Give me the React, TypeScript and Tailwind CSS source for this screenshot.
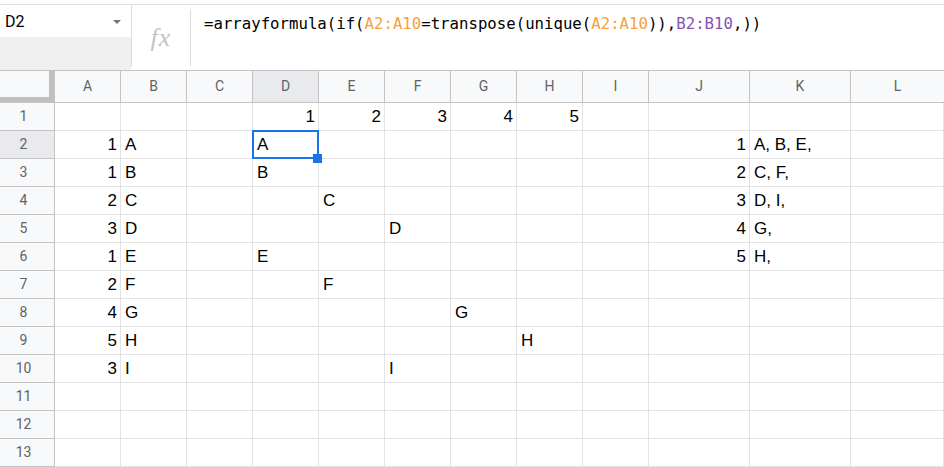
import React from "react";

type Col = { l: string; w: string };
const COLS: Col[] = [
  { l: "A", w: "w-[66px]" },
  { l: "B", w: "w-[66px]" },
  { l: "C", w: "w-[66px]" },
  { l: "D", w: "w-[66px]" },
  { l: "E", w: "w-[66px]" },
  { l: "F", w: "w-[66px]" },
  { l: "G", w: "w-[66px]" },
  { l: "H", w: "w-[66px]" },
  { l: "I", w: "w-[66px]" },
  { l: "J", w: "w-[101px]" },
  { l: "K", w: "w-[101px]" },
  { l: "L", w: "flex-1" },
];

const DATA: Record<string, string> = {
  D1: "1", E1: "2", F1: "3", G1: "4", H1: "5",
  A2: "1", B2: "A", D2: "A", J2: "1", K2: "A, B, E,",
  A3: "1", B3: "B", D3: "B", J3: "2", K3: "C, F,",
  A4: "2", B4: "C", E4: "C", J4: "3", K4: "D, I,",
  A5: "3", B5: "D", F5: "D", J5: "4", K5: "G,",
  A6: "1", B6: "E", D6: "E", J6: "5", K6: "H,",
  A7: "2", B7: "F", E7: "F",
  A8: "4", B8: "G", G8: "G",
  A9: "5", B9: "H", H9: "H",
  A10: "3", B10: "I", F10: "I",
};

const ROWS = Array.from({ length: 13 }, (_, i) => i + 1);

const cellFont = { fontFamily: '"Liberation Sans", Arial, sans-serif' };
const uiFont = { fontFamily: 'Roboto, "Noto Sans", sans-serif' };
const monoFont = { fontFamily: '"DejaVu Sans Mono", "Liberation Mono", monospace' };

function Formula() {
  return (
    <span className="text-[15.7px] leading-[20px] text-black whitespace-nowrap" style={monoFont}>
      =arrayformula(if(
      <span className="text-[#f7a03b]">A2:A10</span>
      =transpose(unique(
      <span className="text-[#f7a03b]">A2:A10</span>
      )),
      <span className="text-[#8553b5]">B2:B10</span>
      ,))
    </span>
  );
}

export default function App() {
  return (
    <div className="w-full h-[467px] overflow-hidden bg-white select-none">
      {/* Formula bar */}
      <div className="h-[5px] border-b border-[#e0e0e0]" />
      <div className="flex h-[65px]">
        <div className="w-[131px] flex flex-col">
          <div className="h-[32px] flex items-start pt-[7px] pl-[5px] pr-[10px] justify-between">
            <span className="text-[16px] leading-[20px] text-black" style={uiFont}>D2</span>
            <svg width="8" height="5" viewBox="0 0 8 5" className="mt-[8px]">
              <path d="M0 0 L8 0 L4 4 Z" fill="#757575" />
            </svg>
          </div>
          <div className="flex-1 bg-[#efefef]" />
        </div>
        <div className="w-px bg-[#dadce0] mb-[3px]" />
        <div className="w-[58px] flex items-center justify-center">
          <span
            className="text-[26px] italic text-[#c4c4c4] leading-none tracking-[1px]"
            style={{ fontFamily: '"Liberation Serif", "Times New Roman", serif' }}
          >
            fx
          </span>
        </div>
        <div className="w-px bg-[#dadce0] mt-[4px] mb-[4px]" />
        <div className="flex-1 pl-[13px] pt-[6px]">
          <Formula />
        </div>
      </div>

      {/* Column header row */}
      <div className="flex h-[33px] border-y border-[#c4c4c4] bg-[#f8f9fa]" style={uiFont}>
        <div className="w-[55px] h-full border-r border-[#c4c4c4]">
          <div className="w-[54px] h-full border-r-[5px] border-b-[5px] border-[#bfbfbf]" />
        </div>
        {COLS.map((c) => (
          <div
            key={c.l}
            className={`${c.w} h-full flex items-center justify-center text-[14px] text-[#5f6368] ${
              c.l === "L" ? "" : "border-r border-[#c4c4c4]"
            } ${c.l === "D" ? "bg-[#e8eaed]" : ""}`}
          >
            {c.l}
          </div>
        ))}
      </div>

      {/* Rows */}
      {ROWS.map((r) => (
        <div key={r} className="flex h-[28px]">
          <div
            className={`w-[55px] h-full border-r border-b border-[#c4c4c4] flex items-center text-[14px] text-[#5f6368] ${
              r === 2 ? "bg-[#e8eaed]" : "bg-[#f8f9fa]"
            }`}
            style={uiFont}
          >
            <span className="w-[47px] text-center">{r}</span>
          </div>
          {COLS.map((c) => {
            const key = `${c.l}${r}`;
            const v = DATA[key];
            const isNum = v !== undefined && /^\d+$/.test(v);
            const selected = key === "D2";
            return (
              <div
                key={key}
                className={`${c.w} h-full border-r border-b border-[#e2e2e2] flex items-end pb-[4px] text-[17px] leading-[18px] text-black whitespace-nowrap ${
                  isNum ? "justify-end pr-[3px]" : "justify-start pl-[4px]"
                } ${selected ? "relative" : ""}`}
                style={cellFont}
              >
                {v}
                {selected && (
                  <>
                    <div className="absolute left-[-1px] top-[-1px] right-[-1px] bottom-[-1px] border-2 border-[#1a73e8] z-10" />
                    <div className="absolute left-[60px] top-[23px] w-[9px] h-[9px] bg-[#1a73e8] z-20" />
                  </>
                )}
              </div>
            );
          })}
        </div>
      ))}
    </div>
  );
}
